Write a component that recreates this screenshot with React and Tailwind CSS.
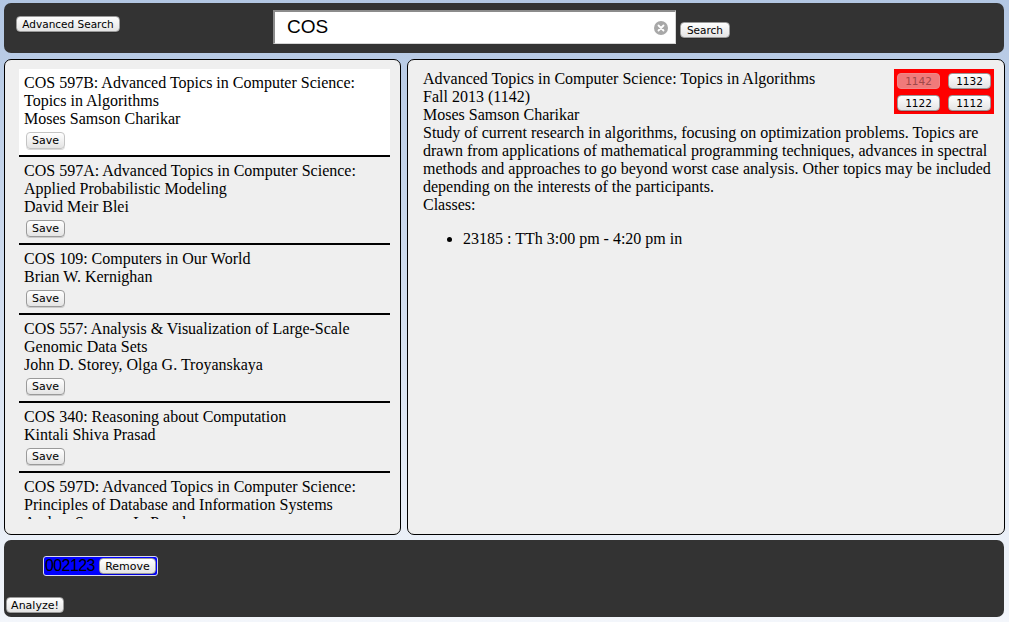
import React from 'react';

const courses = [
  {
    title: 'COS 597B: Advanced Topics in Computer Science: Topics in Algorithms',
    prof: 'Moses Samson Charikar',
    selected: true,
  },
  {
    title: 'COS 597A: Advanced Topics in Computer Science: Applied Probabilistic Modeling',
    prof: 'David Meir Blei',
  },
  { title: 'COS 109: Computers in Our World', prof: 'Brian W. Kernighan' },
  {
    title: 'COS 557: Analysis & Visualization of Large-Scale Genomic Data Sets',
    prof: 'John D. Storey, Olga G. Troyanskaya',
  },
  { title: 'COS 340: Reasoning about Computation', prof: 'Kintali Shiva Prasad' },
  {
    title: 'COS 597D: Advanced Topics in Computer Science: Principles of Database and Information Systems',
    prof: 'Andrea Suzanne LaPaugh',
  },
];

const btn =
  "flex items-center justify-center rounded-[4px] border border-[#9a9a9a] bg-gradient-to-b from-white to-[#e4e4e4] font-['DejaVu_Sans',sans-serif] text-[10.5px] leading-none text-black shadow-[0_1px_0_rgba(0,0,0,0.15)]";

function MacButton({ children, className = '', disabled = false }) {
  return (
    <button
      className={`${btn} ${className} ${disabled ? 'text-[#9a9a9a] border-[#c4c4c4]' : ''}`}
    >
      {children}
    </button>
  );
}

function CourseItem({ course }) {
  return (
    <div
      className={`border-b-2 border-black pt-[5px] pb-[6px] pl-[5px] pr-[5px] ${
        course.selected ? 'bg-white' : ''
      }`}
    >
      <div>{course.title}</div>
      <div>{course.prof}</div>
      <MacButton className="ml-[2px] mt-[4px] h-[17px] w-[39px] text-[11px]" disabled={course.selected}>
        Save
      </MacButton>
    </div>
  );
}

export default function App() {
  return (
    <div className="h-[622px] w-full overflow-hidden bg-gradient-to-b from-[#b3c7e3] to-[#f3f6fb] pt-[3px]">
      {/* header */}
      <div className="ml-[4px] flex h-[50px] w-[1000px] items-start rounded-[7px] bg-[#333333] pl-[12px]">
        <MacButton className="mt-[13px] h-[16px] w-[104px]">Advanced Search</MacButton>
        <div className="relative ml-[153px] mt-[7px] flex h-[34px] w-[403px] items-center border-l-2 border-t-2 border-b border-r border-l-[#8c8c8c] border-t-[#8c8c8c] border-b-[#d6d6d6] border-r-[#d6d6d6] bg-white pl-[12px] font-['Liberation_Sans',sans-serif] text-[19px] text-black">
          COS
          <span className="absolute right-[7px] top-[9px] flex h-[14px] w-[14px] items-center justify-center rounded-full bg-[#a8a8a8]">
            <svg width="8" height="8" viewBox="0 0 8 8">
              <path d="M1.5 1.5L6.5 6.5M6.5 1.5L1.5 6.5" stroke="white" strokeWidth="1.8" strokeLinecap="round" />
            </svg>
          </span>
        </div>
        <MacButton className="ml-[4px] mt-[19px] h-[16px] w-[50px]">Search</MacButton>
      </div>

      {/* panels */}
      <div className="ml-[4px] mt-[6px] flex h-[476px] gap-[6px] font-['Liberation_Serif',serif] text-[16px] leading-[18px] text-black">
        <div className="h-full w-[397px] rounded-[7px] border border-black bg-[#efefef] pl-[14px] pr-[10px] pt-[9px]">
          <div className="h-[450px] overflow-hidden">
            {courses.map((c) => (
              <CourseItem key={c.title} course={c} />
            ))}
          </div>
        </div>

        <div className="h-full w-[598px] rounded-[7px] border border-black bg-[#efefef] pl-[15px] pr-[10px] pt-[10px]">
          <div className="float-right -mt-[1px] grid h-[45px] w-[100px] grid-cols-2 content-start gap-x-[8px] gap-y-[6px] bg-[#ff0000] px-[3px] pt-[4px]">
            <button className="flex h-[16px] items-center justify-center rounded-[4px] border border-[#e88] bg-[#f07a7a] font-['DejaVu_Sans',sans-serif] text-[10.5px] leading-none text-[#a04848]">
              1142
            </button>
            <MacButton className="h-[16px]">1132</MacButton>
            <MacButton className="h-[16px]">1122</MacButton>
            <MacButton className="h-[16px]">1112</MacButton>
          </div>
          <div>Advanced Topics in Computer Science: Topics in Algorithms</div>
          <div>Fall 2013 (1142)</div>
          <div>Moses Samson Charikar</div>
          <div>
            Study of current research in algorithms, focusing on optimization problems. Topics are
            drawn from applications of mathematical programming techniques, advances in spectral
            methods and approaches to go beyond worst case analysis. Other topics may be included
            depending on the interests of the participants.
          </div>
          <div>Classes:</div>
          <ul className="mt-[16px] list-disc pl-[40px]">
            <li>23185 : TTh 3:00 pm - 4:20 pm in</li>
          </ul>
        </div>
      </div>

      {/* bottom bar */}
      <div className="ml-[4px] mt-[5px] h-[77px] w-[1000px] rounded-[7px] bg-[#333333] pt-[16px]">
        <div className="ml-[39px] flex h-[20px] w-[115px] items-center rounded-[3px] border border-[#d8d8f0] bg-[#0000ff] pl-[1px]">
          <span className="font-['Liberation_Sans',sans-serif] text-[16px] leading-[20px] tracking-[-0.6px] text-black">
            002123
          </span>
          <MacButton className="ml-auto mr-[1px] h-[16px] w-[57px] text-[11px]">Remove</MacButton>
        </div>
        <MacButton className="ml-[2px] mt-[21px] h-[16px] w-[58px] text-[11px]">Analyze!</MacButton>
      </div>
    </div>
  );
}
